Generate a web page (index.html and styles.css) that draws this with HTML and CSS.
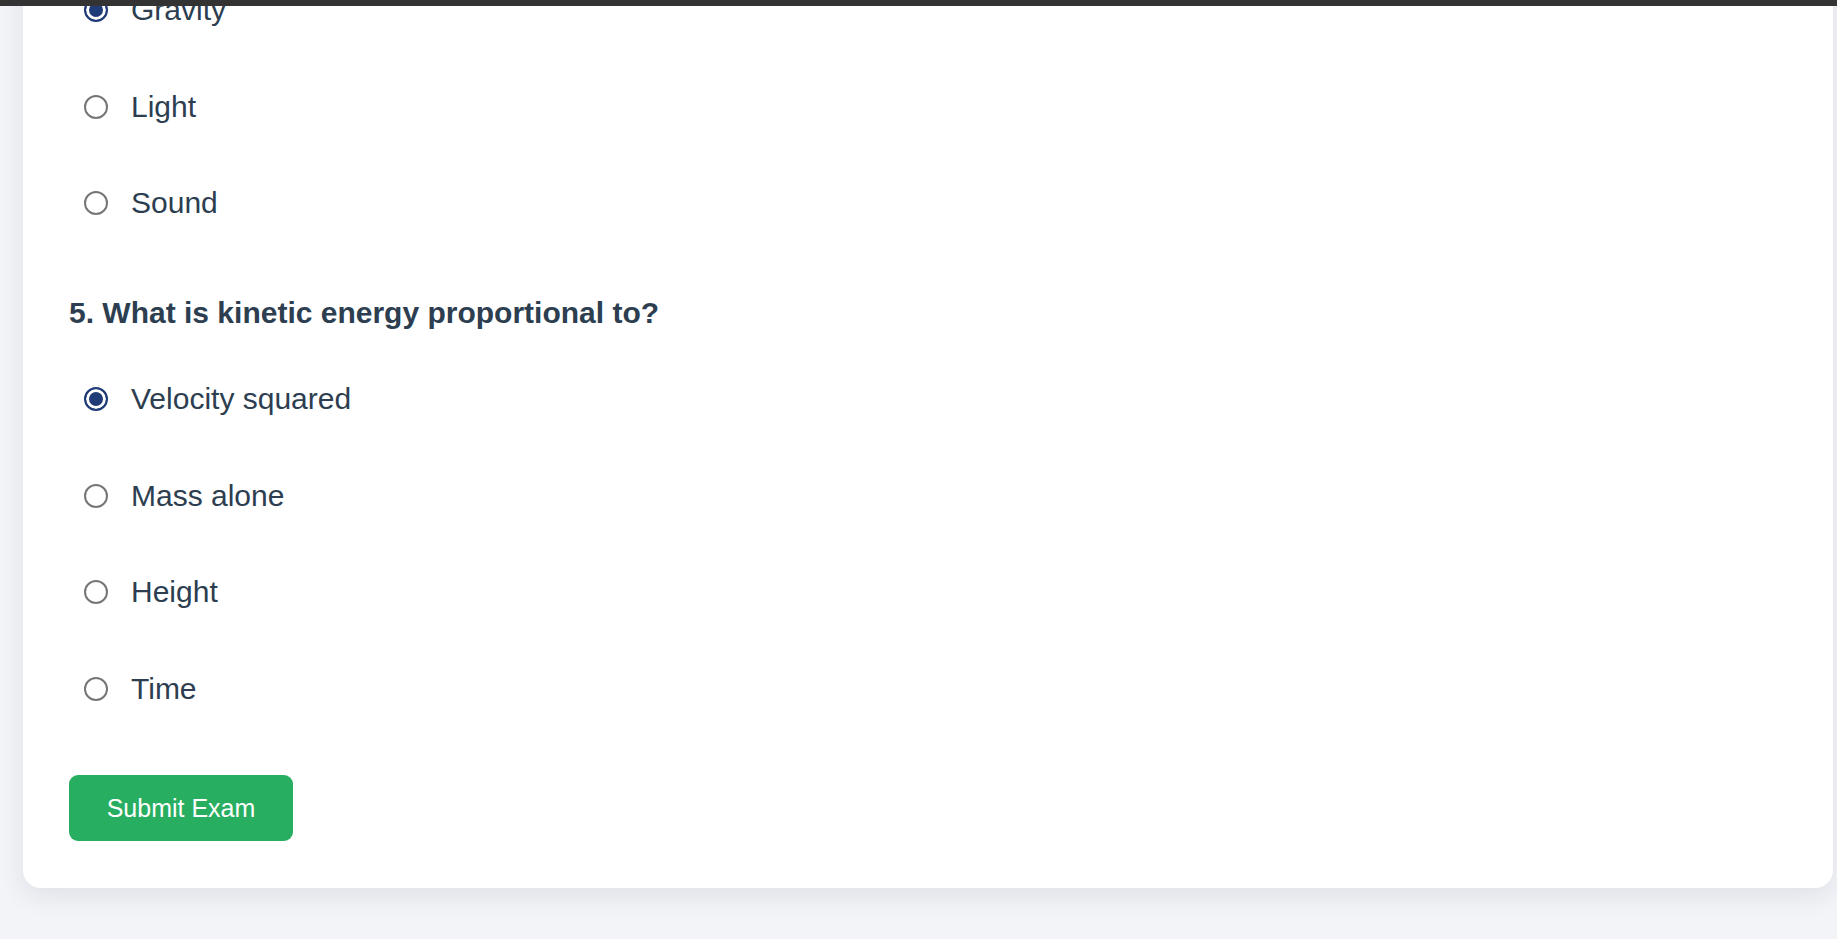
FILE: index.html
```html
<!DOCTYPE html>
<html lang="en">
<head>
<meta charset="utf-8">
<title>Exam</title>
<link rel="stylesheet" href="styles.css">
</head>
<body>
<div class="topbar"></div>
<main class="card">
  <form class="exam">
    <section class="question q-partial">
      <label class="option"><input type="radio" name="q4" checked><span>Gravity</span></label>
      <label class="option"><input type="radio" name="q4"><span>Light</span></label>
      <label class="option"><input type="radio" name="q4"><span>Sound</span></label>
    </section>
    <section class="question">
      <h3 class="q-title">5. What is kinetic energy proportional to?</h3>
      <label class="option"><input type="radio" name="q5" checked><span>Velocity squared</span></label>
      <label class="option"><input type="radio" name="q5"><span>Mass alone</span></label>
      <label class="option"><input type="radio" name="q5"><span>Height</span></label>
      <label class="option"><input type="radio" name="q5"><span>Time</span></label>
    </section>
    <button type="button" class="submit">Submit Exam</button>
  </form>
</main>
</body>
</html>
```
FILE: styles.css
```css
html, body {
  margin: 0;
  padding: 0;
}
body {
  background: #f3f4f8;
  font-family: "Liberation Sans", Arial, sans-serif;
  color: #2c3e50;
  height: 939px;
  overflow: hidden;
}
.topbar {
  position: fixed;
  top: 0;
  left: 0;
  right: 0;
  height: 6px;
  background: #333333;
  z-index: 10;
}
.card {
  margin: -84px 4px 0 23px;
  padding: 46px 46px 47px 46px;
  background: #ffffff;
  border-radius: 18px;
  box-shadow: 0 8px 26px rgba(20, 30, 60, 0.09);
}
.exam {
  display: flex;
  flex-direction: column;
  align-items: flex-start;
}
.question {
  display: flex;
  flex-direction: column;
  align-self: stretch;
  margin-bottom: 43.5px;
}
.question:last-of-type {
  margin-bottom: 38.25px;
}
.q-title {
  margin: 0 0 19.85px 0;
  font-size: 30px;
  line-height: 36px;
  font-weight: 700;
  color: #2c3e50;
}
.option {
  display: flex;
  align-items: center;
  height: 96.5px;
  padding-left: 15px;
  font-size: 30px;
  line-height: 34px;
  color: #2c3e50;
  box-sizing: border-box;
}
.option input {
  appearance: none;
  -webkit-appearance: none;
  width: 24px;
  height: 24px;
  margin: 0 23px 0 0;
  border: 2px solid #767676;
  border-radius: 50%;
  background: #ffffff;
  box-sizing: border-box;
  flex: none;
}
.option input:checked {
  border-color: #1f3c78;
  background: #1f3c78;
  box-shadow: inset 0 0 0 3px #ffffff;
}
.submit {
  display: flex;
  align-items: center;
  justify-content: center;
  width: 224px;
  height: 66px;
  border: none;
  border-radius: 9px;
  background: #27ae60;
  color: #ffffff;
  font-family: "Liberation Sans", Arial, sans-serif;
  font-size: 25px;
  padding: 0;
}
```
